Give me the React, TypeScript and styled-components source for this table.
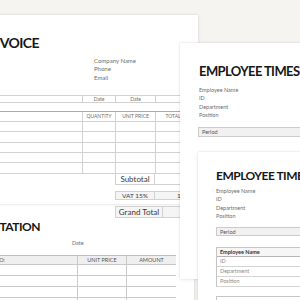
import React from 'react'
import styled, { createGlobalStyle } from 'styled-components'

const GlobalStyle = createGlobalStyle`
  html, body {
    margin: 0;
    padding: 0;
    background: #f6f4f0;
  }
  body {
    font-family: Lato, "Open Sans", sans-serif;
  }
`

const Desk = styled.div`
  position: relative;
  width: 300px;
  height: 300px;
  overflow: hidden;
  background: #f6f4f0;
`

// Each printed page lies on the desk at its own spot
const Sheet = styled.div<{ $left: number; $top: number; $width: number; $height: number; $z: number; $pad: string }>`
  position: absolute;
  left: ${(p) => p.$left}px;
  top: ${(p) => p.$top}px;
  width: ${(p) => p.$width}px;
  height: ${(p) => p.$height}px;
  z-index: ${(p) => p.$z};
  padding: ${(p) => p.$pad};
  box-sizing: border-box;
  background: #fff;
  box-shadow: 0 0 2px rgba(0, 0, 0, 0.13), 0 1px 5px rgba(0, 0, 0, 0.05);
  display: flex;
  flex-direction: column;
  align-items: flex-start;
`

const Title = styled.h1<{ $size: number; $track: number; $shift?: number }>`
  margin: 0 0 0 ${(p) => p.$shift ?? 0}px;
  font-size: ${(p) => p.$size}px;
  line-height: ${(p) => Math.round(p.$size * 1.2)}px;
  letter-spacing: ${(p) => p.$track}px;
  font-weight: 700;
  color: #171717;
  white-space: nowrap;
`

const InfoLines = styled.div<{ $indent: number; $top: number; $size?: number }>`
  margin-top: ${(p) => p.$top}px;
  padding-left: ${(p) => p.$indent}px;
  display: flex;
  flex-direction: column;
  font-size: ${(p) => p.$size ?? 6}px;
  line-height: 8.3px;
  color: #6e6e6e;
  white-space: nowrap;
`

/* ---------- invoice ---------- */

const invoiceCols = '97px 33px 40px 35px'

const DateRow = styled.div`
  margin-top: 13px;
  width: 205px;
  height: 10px;
  box-sizing: border-box;
  display: grid;
  grid-template-columns: ${invoiceCols};
  border-top: 1px solid #d2d2d2;
  border-bottom: 1px solid #d2d2d2;
`

const Cell = styled.div<{ $line?: boolean; $size?: number }>`
  display: flex;
  align-items: center;
  justify-content: center;
  border-left: ${(p) => (p.$line ? '1px solid #d2d2d2' : 'none')};
  font-size: ${(p) => p.$size ?? 5}px;
  color: #6f6f6f;
  white-space: nowrap;
  overflow: hidden;
`

const ItemTable = styled.div`
  margin-top: 8px;
  width: 205px;
  display: flex;
  flex-direction: column;
`

const ItemRow = styled.div<{ $head?: boolean }>`
  display: grid;
  grid-template-columns: ${invoiceCols};
  height: ${(p) => (p.$head ? 11 : 10.4)}px;
  box-sizing: border-box;
  border-top: ${(p) => (p.$head ? '1px solid #a9a9a9' : 'none')};
  border-bottom: 1px solid #d2d2d2;
`

const TotalsRow = styled.div<{ $top: number; $height: number; $labelWidth: number }>`
  margin-top: ${(p) => p.$top}px;
  width: 205px;
  height: ${(p) => p.$height}px;
  display: grid;
  grid-template-columns: 130px ${(p) => p.$labelWidth}px 1fr;
`

const TotalBox = styled.div<{ $boxed?: boolean; $size: number; $align?: string }>`
  display: flex;
  align-items: center;
  justify-content: ${(p) => p.$align ?? 'center'};
  padding-left: ${(p) => (p.$align ? '22px' : '0')};
  box-sizing: border-box;
  font-size: ${(p) => p.$size}px;
  color: #3a3a3a;
  white-space: nowrap;
  background: ${(p) => (p.$boxed ? '#f5f5f5' : 'transparent')};
  border: 1px solid #d2d2d2;
  border-top: ${(p) => (p.$boxed ? '1px solid #d2d2d2' : 'none')};
  & + & {
    border-left: none;
  }
`

/* ---------- quotation ---------- */

const quoteCols = '87px 49px 50px'

const QuoteTable = styled.div`
  margin-top: 8px;
  width: 186px;
  display: flex;
  flex-direction: column;
`

const QuoteRow = styled.div<{ $head?: boolean }>`
  display: grid;
  grid-template-columns: ${quoteCols};
  height: ${(p) => (p.$head ? 10 : 11)}px;
  box-sizing: border-box;
  background: ${(p) => (p.$head ? '#efefef' : '#fff')};
  border-top: ${(p) => (p.$head ? '1px solid #bdbdbd' : 'none')};
  border-bottom: 1px solid #c9c9c9;
`

const QuoteCell = styled.div<{ $line?: boolean; $left?: boolean }>`
  display: flex;
  align-items: center;
  justify-content: ${(p) => (p.$left ? 'flex-start' : 'center')};
  padding-left: ${(p) => (p.$left ? '5px' : '0')};
  border-left: ${(p) => (p.$line ? '1px solid #c9c9c9' : 'none')};
  font-size: 5.5px;
  color: #555;
  white-space: nowrap;
`

/* ---------- timesheets ---------- */

const PeriodBox = styled.div<{ $top: number; $height: number; $shift?: number }>`
  margin-top: ${(p) => p.$top}px;
  margin-left: ${(p) => p.$shift ?? 0}px;
  width: 130px;
  height: ${(p) => p.$height}px;
  box-sizing: border-box;
  display: flex;
  align-items: center;
  padding-left: 3px;
  background: #f1f1f1;
  border: 1px solid #cbcbcb;
  font-size: 5.5px;
  color: #555;
`

const SheetTable = styled.div<{ $top: number }>`
  margin-top: ${(p) => p.$top}px;
  width: 130px;
  display: flex;
  flex-direction: column;
  border: 1px solid #c4c4c4;
  border-bottom: none;
`

const SheetRow = styled.div<{ $head?: boolean }>`
  height: ${(p) => (p.$head ? 9 : 10)}px;
  box-sizing: border-box;
  display: flex;
  align-items: center;
  padding-left: 3px;
  border-bottom: 1px solid ${(p) => (p.$head ? '#b5b5b5' : '#d4d4d4')};
  background: ${(p) => (p.$head ? '#f6f6f6' : '#fff')};
  font-size: 5.5px;
  font-weight: ${(p) => (p.$head ? 700 : 400)};
  color: ${(p) => (p.$head ? '#333' : '#8a8a8a')};
`

const NextBox = styled.div`
  margin-top: 9px;
  width: 130px;
  height: 20px;
  border-top: 1px solid #c4c4c4;
  border-left: 1px solid #c4c4c4;
`

const itemRows = [0, 1, 2, 3, 4]
const quoteRows = [0, 1, 2, 3]
const infoFields = ['Employee Name', 'ID', 'Department', 'Position']

export default function App() {
  return (
    <>
      <GlobalStyle />
      <Desk>
        <Sheet $left={-30} $top={15} $width={228} $height={189} $z={2} $pad="19px 0 0 15px">
          <Title $size={14} $track={-0.6} $shift={1}>INVOICE</Title>
          <InfoLines $indent={109} $top={6}>
            <span>Company Name</span>
            <span>Phone</span>
            <span>Email</span>
          </InfoLines>
          <DateRow>
            <Cell />
            <Cell $line>Date</Cell>
            <Cell $line>Date</Cell>
            <Cell $line />
          </DateRow>
          <ItemTable>
            <ItemRow $head>
              <Cell />
              <Cell $line>QUANTITY</Cell>
              <Cell $line>UNIT PRICE</Cell>
              <Cell $line>TOTAL</Cell>
            </ItemRow>
            {itemRows.map((r) => (
              <ItemRow key={r}>
                <Cell />
                <Cell $line />
                <Cell $line />
                <Cell $line />
              </ItemRow>
            ))}
          </ItemTable>
          <TotalsRow $top={0} $height={13} $labelWidth={40}>
            <span />
            <TotalBox $size={8}>Subtotal</TotalBox>
            <TotalBox $size={8} />
          </TotalsRow>
          <TotalsRow $top={6} $height={10} $labelWidth={40}>
            <span />
            <TotalBox $boxed $size={6.5}>VAT 15%</TotalBox>
            <TotalBox $boxed $size={6.5} $align="flex-start">100</TotalBox>
          </TotalsRow>
          <TotalsRow $top={6} $height={12} $labelWidth={48}>
            <span />
            <TotalBox $boxed $size={8}>Grand Total</TotalBox>
            <TotalBox $boxed $size={8} $align="flex-start">1150</TotalBox>
          </TotalsRow>
        </Sheet>

        <Sheet $left={-30} $top={204} $width={224} $height={130} $z={1} $pad="16px 0 0 20px">
          <Title $size={12} $track={-0.5} $shift={-17}>QUOTATION</Title>
          <InfoLines $indent={82} $top={5} $size={5.5}>
            <span>Date</span>
          </InfoLines>
          <QuoteTable>
            <QuoteRow $head>
              <QuoteCell $left>NO:</QuoteCell>
              <QuoteCell $line>UNIT PRICE</QuoteCell>
              <QuoteCell $line>AMOUNT</QuoteCell>
            </QuoteRow>
            {quoteRows.map((r) => (
              <QuoteRow key={r}>
                <QuoteCell />
                <QuoteCell $line />
                <QuoteCell $line />
              </QuoteRow>
            ))}
          </QuoteTable>
        </Sheet>

        <Sheet $left={180} $top={43} $width={140} $height={236} $z={3} $pad="20px 0 0 19px">
          <Title $size={13} $track={-0.6}>EMPLOYEE TIMESHEET</Title>
          <InfoLines $indent={0} $top={7} $size={5.5}>
            {infoFields.map((f) => (
              <span key={f}>{f}</span>
            ))}
          </InfoLines>
          <PeriodBox $top={8} $height={10} $shift={-1}>Period</PeriodBox>
        </Sheet>

        <Sheet $left={198} $top={152} $width={120} $height={160} $z={4} $pad="17px 0 0 18px">
          <Title $size={12} $track={-0.5}>EMPLOYEE TIMESHEET</Title>
          <InfoLines $indent={0} $top={4} $size={5.5}>
            {infoFields.map((f) => (
              <span key={f}>{f}</span>
            ))}
          </InfoLines>
          <PeriodBox $top={7} $height={11}>Period</PeriodBox>
          <SheetTable $top={11}>
            {infoFields.map((f, i) => (
              <SheetRow key={f} $head={i === 0}>
                {f}
              </SheetRow>
            ))}
          </SheetTable>
          <NextBox />
        </Sheet>
      </Desk>
    </>
  )
}
